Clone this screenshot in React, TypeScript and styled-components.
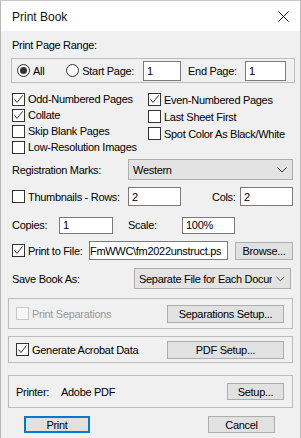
import React from "react";
import styled, { createGlobalStyle } from "styled-components";

const GlobalStyle = createGlobalStyle`
  html, body {
    margin: 0;
    padding: 0;
    background: #f0f0f0;
  }
  * {
    box-sizing: border-box;
  }
`;

function CheckMark() {
  return (
    <svg width="11" height="11" viewBox="0 0 11 11">
      <path d="M1.5 5.5 L4 8.5 L9.5 1.5" fill="none" stroke="#333" strokeWidth="1" />
    </svg>
  );
}

function Chevron() {
  return (
    <svg width="10" height="6" viewBox="0 0 10 6">
      <path d="M0.5 0.5 L5 5 L9.5 0.5" fill="none" stroke="#333" strokeWidth="1" />
    </svg>
  );
}

interface ICheck {
  label: string;
  checked?: boolean;
  disabled?: boolean;
}

function Check({ label, checked, disabled }: ICheck) {
  return (
    <S.CheckItem $disabled={disabled}>
      <S.Box $disabled={disabled}>{checked && <CheckMark />}</S.Box>
      <span>{label}</span>
    </S.CheckItem>
  );
}

function Radio({ label, selected }: { label: string; selected?: boolean }) {
  return (
    <S.RadioItem>
      <S.Circle>{selected && <S.Dot />}</S.Circle>
      <span>{label}</span>
    </S.RadioItem>
  );
}

export default function App() {
  return (
    <>
      <GlobalStyle />
      <S.Window>
        <S.TitleBar>
          <S.Title>Print Book</S.Title>
          <svg width="11" height="11" viewBox="0 0 11 11">
            <path d="M0.5 0.5 L10.5 10.5 M10.5 0.5 L0.5 10.5" stroke="#111" strokeWidth="1" />
          </svg>
        </S.TitleBar>

        <S.Body>
          <S.Row $mt={7} $h={14}>
            <S.Label>Print Page Range:</S.Label>
          </S.Row>

          <S.RangeBox>
            <Radio label="All" selected />
            <S.Spacer $w={22} />
            <Radio label="Start Page:" />
            <S.Spacer $w={9} />
            <S.Input $w={38} $h={20}>1</S.Input>
            <S.Spacer $w={7} />
            <S.Label $w={57}>End Page:</S.Label>
            <S.Input $w={41} $h={20}>1</S.Input>
          </S.RangeBox>

          <S.CheckGrid>
            <S.CheckColumn $rowH={16}>
              <Check label="Odd-Numbered Pages" checked />
              <Check label="Collate" checked />
              <Check label="Skip Blank Pages" />
              <Check label="Low-Resolution Images" />
            </S.CheckColumn>
            <S.CheckColumn $rowH={17}>
              <Check label="Even-Numbered Pages" checked />
              <Check label="Last Sheet First" />
              <Check label="Spot Color As Black/White" />
            </S.CheckColumn>
          </S.CheckGrid>

          <S.Row $mt={4} $h={21}>
            <S.Label $w={116}>Registration Marks:</S.Label>
            <S.Select $w={165}>
              <S.SelectText>Western</S.SelectText>
              <Chevron />
            </S.Select>
          </S.Row>

          <S.Row $mt={7} $h={19}>
            <S.Fixed $w={116}>
              <Check label="Thumbnails - Rows:" />
            </S.Fixed>
            <S.Input $w={53} $h={19}>2</S.Input>
            <S.Spacer $w={31} />
            <S.Label $w={28}>Cols:</S.Label>
            <S.Input $w={53} $h={19}>2</S.Input>
          </S.Row>

          <S.Row $mt={10} $h={18}>
            <S.Label $w={47}>Copies:</S.Label>
            <S.Input $w={54} $h={17}>1</S.Input>
            <S.Spacer $w={15} />
            <S.Label $w={54}>Scale:</S.Label>
            <S.Input $w={53} $h={17}>100%</S.Input>
          </S.Row>

          <S.Row $mt={7} $h={19}>
            <S.Fixed $w={77}>
              <Check label="Print to File:" checked />
            </S.Fixed>
            <S.Input $w={139} $h={19}>
              <S.Scrolled>FmWWC\fm2022unstruct.ps</S.Scrolled>
            </S.Input>
            <S.Spacer $w={7} />
            <S.Button $w={58} $h={18}>Browse...</S.Button>
          </S.Row>

          <S.Row $mt={8} $h={21}>
            <S.Label $w={122}>Save Book As:</S.Label>
            <S.Select $w={157}>
              <S.SelectText>Separate File for Each Document</S.SelectText>
              <Chevron />
            </S.Select>
          </S.Row>

          <S.GroupBox $mt={9} $h={31}>
            <S.Fixed $w={151}>
              <Check label="Print Separations" disabled />
            </S.Fixed>
            <S.Button $w={117} $h={18}>Separations Setup...</S.Button>
          </S.GroupBox>

          <S.GroupBox $mt={7} $h={27}>
            <S.Fixed $w={151}>
              <Check label="Generate Acrobat Data" checked />
            </S.Fixed>
            <S.Button $w={117} $h={18}>PDF Setup...</S.Button>
          </S.GroupBox>

          <S.GroupBox $mt={12} $h={33}>
            <S.Label $w={45}>Printer:</S.Label>
            <S.Label $w={166}>Adobe PDF</S.Label>
            <S.Button $w={57} $h={17}>Setup...</S.Button>
          </S.GroupBox>

          <S.ActionRow>
            <S.Button $w={66} $h={17} $default>
              Print
            </S.Button>
            <S.Button $w={67} $h={17}>
              Cancel
            </S.Button>
          </S.ActionRow>
        </S.Body>
      </S.Window>
    </>
  );
}

const S = {
  Window: styled.div`
    width: 301px;
    height: 438px;
    background: #f0f0f0;
    border-left: 1px solid #b9b9b9;
    border-right: 1px solid #b9b9b9;
    border-top: 1px solid #c8c8c8;
    font-family: "Liberation Sans", Arial, sans-serif;
    font-size: 11px;
    letter-spacing: -0.3px;
    color: #000;
    overflow: hidden;
  `,
  TitleBar: styled.div`
    height: 30px;
    background: #fff;
    display: flex;
    align-items: center;
    justify-content: space-between;
    padding: 1px 11px 0 11px;
  `,
  Title: styled.span`
    font-size: 12px;
    letter-spacing: 0;
    color: #111;
    padding-top: 1px;
  `,
  Body: styled.div`
    padding-left: 7px;
  `,
  Row: styled.div<{ $mt: number; $h: number }>`
    display: flex;
    align-items: center;
    margin-top: ${(p) => p.$mt}px;
    height: ${(p) => p.$h}px;
    padding-left: 4px;
  `,
  Label: styled.span<{ $w?: number }>`
    flex: none;
    white-space: nowrap;
    width: ${(p) => (p.$w ? `${p.$w}px` : "auto")};
  `,
  Fixed: styled.div<{ $w: number }>`
    flex: none;
    width: ${(p) => p.$w}px;
  `,
  Spacer: styled.div<{ $w: number }>`
    flex: none;
    width: ${(p) => p.$w}px;
  `,
  RangeBox: styled.div`
    display: flex;
    align-items: center;
    margin: 6px 0 0 3px;
    width: 284px;
    height: 25px;
    border: 1px solid #bcbcbc;
    padding-left: 5px;
  `,
  RadioItem: styled.label`
    display: flex;
    align-items: center;
    gap: 3px;
    white-space: nowrap;
  `,
  Circle: styled.span`
    width: 13px;
    height: 13px;
    border: 1px solid #333;
    border-radius: 50%;
    background: #fff;
    display: flex;
    align-items: center;
    justify-content: center;
  `,
  Dot: styled.span`
    width: 7px;
    height: 7px;
    border-radius: 50%;
    background: #333;
  `,
  CheckGrid: styled.div`
    display: grid;
    grid-template-columns: 136px 1fr;
    margin-top: 8px;
    height: 64px;
    padding-left: 4px;
  `,
  CheckColumn: styled.div<{ $rowH: number }>`
    display: grid;
    grid-auto-rows: ${(p) => p.$rowH}px;
    align-items: center;
  `,
  CheckItem: styled.label<{ $disabled?: boolean }>`
    display: flex;
    align-items: center;
    gap: 3px;
    white-space: nowrap;
    color: ${(p) => (p.$disabled ? "#9a9a9a" : "#000")};
  `,
  Box: styled.span<{ $disabled?: boolean }>`
    width: 13px;
    height: 13px;
    flex: none;
    border: 1px solid ${(p) => (p.$disabled ? "#c8c8c8" : "#333")};
    background: ${(p) => (p.$disabled ? "#f7f7f7" : "#fff")};
    display: flex;
    align-items: center;
    justify-content: center;
  `,
  Input: styled.div<{ $w: number; $h: number }>`
    flex: none;
    width: ${(p) => p.$w}px;
    height: ${(p) => p.$h}px;
    border: 1px solid #7a7a7a;
    background: #fff;
    display: flex;
    align-items: center;
    padding-left: 3px;
    overflow: hidden;
    white-space: nowrap;
  `,
  Scrolled: styled.span`
    margin-left: -3px;
  `,
  Select: styled.div<{ $w: number }>`
    flex: none;
    width: ${(p) => p.$w}px;
    height: 21px;
    border: 1px solid #adadad;
    background: #e3e3e3;
    display: flex;
    align-items: center;
    justify-content: space-between;
    padding: 0 5px 0 4px;
    gap: 4px;
  `,
  SelectText: styled.span`
    overflow: hidden;
    white-space: nowrap;
  `,
  Button: styled.div<{ $w: number; $h: number; $default?: boolean }>`
    flex: none;
    width: ${(p) => p.$w}px;
    height: ${(p) => p.$h}px;
    border: ${(p) => (p.$default ? "2px solid #0078d7" : "1px solid #adadad")};
    background: #e1e1e1;
    display: flex;
    align-items: center;
    justify-content: center;
    white-space: nowrap;
  `,
  GroupBox: styled.div<{ $mt: number; $h: number }>`
    display: flex;
    align-items: center;
    margin-top: ${(p) => p.$mt}px;
    height: ${(p) => p.$h}px;
    width: 285px;
    border: 1px solid #bcbcbc;
    padding-left: 7px;
  `,
  ActionRow: styled.div`
    display: flex;
    align-items: center;
    justify-content: space-between;
    margin-top: 8px;
    height: 17px;
    padding: 0 20px 0 16px;
    width: 287px;
  `,
};
